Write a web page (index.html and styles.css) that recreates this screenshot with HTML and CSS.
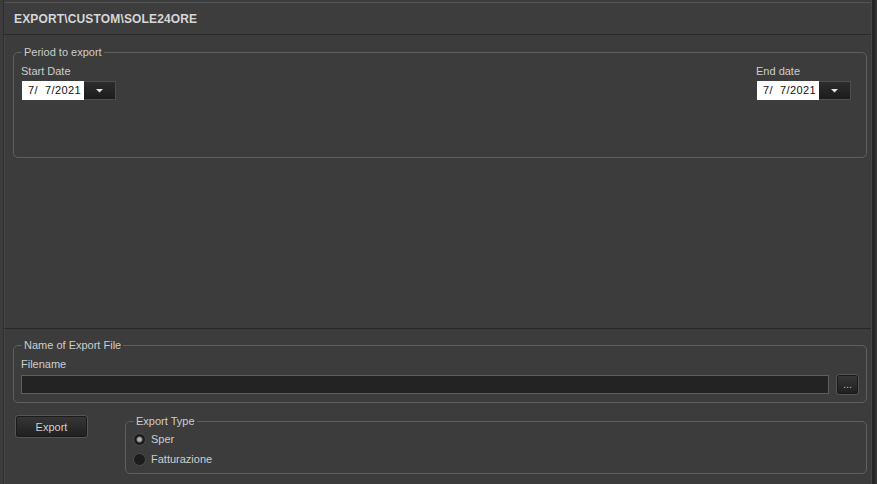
FILE: index.html
```html
<!DOCTYPE html>
<html>
<head>
<meta charset="utf-8">
<link rel="stylesheet" href="styles.css">
</head>
<body>
<div class="app">
  <div class="main">
    <div class="titlebar"><span class="title">EXPORT\CUSTOM\SOLE24ORE</span></div>
    <div class="panel upper">
      <fieldset class="group period">
        <legend>Period to export</legend>
        <div class="dates">
          <div class="field">
            <span class="label">Start Date</span>
            <div class="datepick">
              <span class="dval">7/  7/2021</span>
              <span class="dbtn"><svg width="7" height="4" viewBox="0 0 7 4"><path d="M0 0H7L3.5 3.5Z" fill="#e6e6e6"/></svg></span>
            </div>
          </div>
          <div class="field">
            <span class="label">End date</span>
            <div class="datepick">
              <span class="dval">7/  7/2021</span>
              <span class="dbtn"><svg width="7" height="4" viewBox="0 0 7 4"><path d="M0 0H7L3.5 3.5Z" fill="#e6e6e6"/></svg></span>
            </div>
          </div>
        </div>
      </fieldset>
    </div>
    <div class="panel lower">
      <fieldset class="group file">
        <legend>Name of Export File</legend>
        <span class="label">Filename</span>
        <div class="file-row">
          <div class="textbox"></div>
          <button class="btn dots">...</button>
        </div>
      </fieldset>
      <div class="bottom-row">
        <button class="btn export">Export</button>
        <fieldset class="group type">
          <legend>Export Type</legend>
          <div class="radio-row"><span class="radio checked"></span><span>Sper</span></div>
          <div class="radio-row"><span class="radio"></span><span>Fatturazione</span></div>
        </fieldset>
      </div>
    </div>
  </div>
  <div class="rightbar"></div>
</div>
</body>
</html>
```
FILE: styles.css
```css
* { box-sizing: border-box; }
html, body {
  margin: 0;
  padding: 0;
  background: #3c3c3c;
  width: 877px;
  height: 484px;
  overflow: hidden;
  font-family: "Liberation Sans", Arial, sans-serif;
  font-size: 11px;
  color: #cdcdcd;
}
.app {
  display: flex;
  height: 484px;
}
.main {
  flex: 1;
  margin-left: 3px;
  border-left: 1px solid #2e2e2e;
  display: flex;
  flex-direction: column;
}
.rightbar {
  width: 6px;
  background: linear-gradient(to right, #474747 0 1px, #272727 1px 4px, #343434 4px);
}
.titlebar {
  margin-top: 2px;
  height: 33px;
  border-top: 1px solid #555555;
  border-bottom: 1px solid #2a2a2a;
  display: flex;
  align-items: center;
  padding: 1px 0 0 10px;
  background: #3d3d3d;
}
.title {
  font-weight: bold;
  font-size: 12px;
  color: #d6d6d6;
  letter-spacing: 0.15px;
}
.panel {
  border-left: 1px solid #474747;
  padding: 0 4px 0 8px;
}
.upper {
  height: 294px;
  padding-top: 11px;
  border-bottom: 1px solid #262626;
}
.lower {
  flex: 1;
  padding-top: 10px;
}
.group {
  margin: 0;
  min-width: 0;
  border: 1px solid #5f5f5f;
  border-radius: 5px;
  padding: 0 7px;
}
.group legend {
  padding: 0 2px;
  margin-left: 1px;
  line-height: 13px;
  font-size: 11px;
  color: #cdcdcd;
}
.label {
  display: block;
  line-height: 13px;
}
.dates {
  display: flex;
  justify-content: space-between;
  padding: 6px 8px 0 0;
  height: 98px;
}
.field .label {
  margin-bottom: 3px;
}
.datepick {
  display: flex;
  width: 94px;
  height: 19px;
  margin-left: 1px;
}
.dval {
  width: 62px;
  background: #ffffff;
  color: #111;
  white-space: pre;
  text-align: right;
  padding-right: 3px;
  line-height: 19px;
  font-size: 11px;
  letter-spacing: 0.4px;
}
.dbtn {
  flex: 1;
  background: linear-gradient(#2c2c2c, #1c1c1c);
  border: 1px solid #4e4e4e;
  border-left: 0;
  display: flex;
  align-items: center;
  justify-content: center;
}
.file {
  padding-top: 6px;
  padding-bottom: 7px;
}
.file .label {
  margin-bottom: 3px;
}
.file-row {
  display: flex;
  align-items: center;
  gap: 7px;
}
.textbox {
  flex: 1;
  height: 19px;
  background: #232323;
  border: 1px solid #5e5e5e;
}
.btn {
  font-family: "Liberation Sans", Arial, sans-serif;
  font-size: 11px;
  color: #cfcfcf;
  background: linear-gradient(#373737, #1f1f1f);
  border: 1px solid #555555;
  border-radius: 3px;
  box-shadow: inset 0 0 0 1px #1a1a1a;
  padding: 0;
}
.dots {
  width: 23px;
  height: 21px;
  line-height: 19px;
  color: #bbb;
}
.bottom-row {
  display: flex;
  align-items: flex-start;
  padding-top: 12px;
}
.export {
  width: 73px;
  height: 23px;
  margin-left: 2px;
  margin-right: 37px;
}
.type {
  flex: 1;
  margin-top: 0;
  padding-top: 1px;
  padding-bottom: 4px;
}
.radio-row {
  display: flex;
  align-items: center;
  height: 20px;
  gap: 5px;
}
.radio {
  width: 13px;
  height: 13px;
  border-radius: 50%;
  background: #1c1c1c;
  border: 1px solid #4d4d4d;
}
.radio.checked {
  background: radial-gradient(circle, #b0b0b0 0 1.5px, #7a7a7a 2.5px, #1c1c1c 3.5px);
}
```
